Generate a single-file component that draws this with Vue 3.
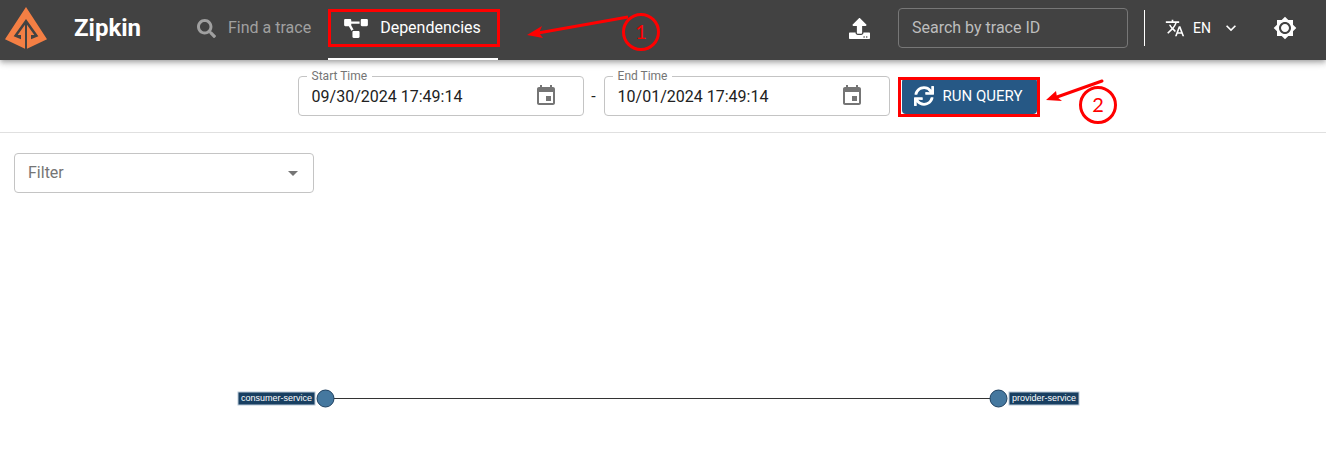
<script setup>
import { ref } from 'vue'

const icons = {
  search: 'M505 442.7L405.3 343c-4.5-4.5-10.6-7-17-7H372c27.6-35.3 44-79.7 44-128C416 93.1 322.9 0 208 0S0 93.1 0 208s93.1 208 208 208c48.3 0 92.7-16.4 128-44v16.3c0 6.4 2.5 12.5 7 17l99.7 99.7c9.4 9.4 24.6 9.4 33.9 0l28.3-28.3c9.4-9.4 9.4-24.6.1-34zM208 336c-70.7 0-128-57.2-128-128 0-70.7 57.2-128 128-128 70.7 0 128 57.2 128 128 0 70.7-57.2 128-128 128z',
  diagram: 'M384 320H256c-17.67 0-32 14.33-32 32v128c0 17.67 14.33 32 32 32h128c17.67 0 32-14.33 32-32V352c0-17.67-14.33-32-32-32zM192 32c0-17.67-14.33-32-32-32H32C14.33 0 0 14.33 0 32v128c0 17.67 14.33 32 32 32h95.72l73.16 128.04C211.98 300.98 232.4 288 256 288h.28L192 175.51V128h224V64H192V32zM608 0H480c-17.67 0-32 14.33-32 32v128c0 17.67 14.33 32 32 32h128c17.67 0 32-14.33 32-32V32c0-17.67-14.33-32-32-32z',
  upload: 'M296 384h-80c-13.3 0-24-10.7-24-24V192h-87.7c-17.8 0-26.7-21.5-14.1-34.1L242.3 5.7c7.5-7.5 19.8-7.5 27.3 0l152.2 152.2c12.6 12.6 3.7 34.1-14.1 34.1H320v168c0 13.3-10.7 24-24 24zm216-8v112c0 13.3-10.7 24-24 24H24c-13.3 0-24-10.7-24-24V376c0-13.3 10.7-24 24-24h136v8c0 30.9 25.1 56 56 56h80c30.9 0 56-25.1 56-56v-8h136c13.3 0 24 10.7 24 24zm-124 88c0-11-9-20-20-20s-20 9-20 20 9 20 20 20 20-9 20-20zm64 0c0-11-9-20-20-20s-20 9-20 20 9 20 20 20 20-9 20-20z',
  sync: 'M440.65 12.57l4 82.77A247.16 247.16 0 0 0 255.83 8C134.73 8 33.91 94.92 12.29 209.82A12 12 0 0 0 24.09 224h49.05a12 12 0 0 0 11.67-9.26 175.91 175.91 0 0 1 317-56.94l-101.46-4.86a12 12 0 0 0-12.57 12v47.41a12 12 0 0 0 12 12H500a12 12 0 0 0 12-12V12a12 12 0 0 0-12-12h-47.37a12 12 0 0 0-11.98 12.57zM255.83 432a175.61 175.61 0 0 1-146-77.8l101.8 4.87a12 12 0 0 0 12.57-12v-47.4a12 12 0 0 0-12-12H12a12 12 0 0 0-12 12V500a12 12 0 0 0 12 12h47.35a12 12 0 0 0 12-12.6l-4.15-82.57A247.17 247.17 0 0 0 255.83 504c121.11 0 221.93-86.92 243.55-201.82a12 12 0 0 0-11.8-14.18h-49.05a12 12 0 0 0-11.67 9.26A175.86 175.86 0 0 1 255.83 432z',
  translate: 'M12.87 15.07l-2.54-2.51.03-.03c1.74-1.94 2.98-4.17 3.71-6.53H17V4h-7V2H8v2H1v1.99h11.17C11.5 7.92 10.44 9.75 9 11.35 8.07 10.32 7.3 9.19 6.69 8h-2c.73 1.63 1.73 3.17 2.98 4.56l-5.09 5.02L4 19l5-5 3.11 3.11.76-2.04zM18.5 10h-2L12 22h2l1.12-3h4.75L21 22h2l-4.5-12zm-2.62 7l1.62-4.33L19.12 17h-3.24z',
  chevron: 'M16.59 8.59L12 13.17 7.41 8.59 6 10l6 6 6-6z',
  sun: 'M20 8.69V4h-4.69L12 .69 8.69 4H4v4.69L.69 12 4 15.31V20h4.69L12 23.31 15.31 20H20v-4.69L23.31 12 20 8.69zM12 18c-3.31 0-6-2.69-6-6s2.69-6 6-6 6 2.69 6 6-2.69 6-6 6zm0-10c-2.21 0-4 1.79-4 4s1.79 4 4 4 4-1.79 4-4-1.79-4-4-4z',
  calendar: 'M17 12h-5v5h5v-5zM16 1v2H8V1H6v2H5c-1.11 0-1.99.9-1.99 2L3 19c0 1.1.89 2 2 2h14c1.1 0 2-.9 2-2V5c0-1.1-.9-2-2-2h-1V1h-2zm3 18H5V8h14v11z'
}

const traceId = ref('')
const language = ref('EN')
const filter = ref('')
const startTime = ref('09/30/2024 17:49:14')
const endTime = ref('10/01/2024 17:49:14')
</script>

<template>
  <header class="bar">
    <svg class="logo" viewBox="0 0 126 126" aria-hidden="true">
      <path fill="#f47f44" d="M63 0 126 97 66 125V53l22 31-10 0v13l22-9L63 36 26 88l22 9V84H38l22-31v72L0 97z" fill-rule="evenodd" />
    </svg>
    <h1 class="brand">Zipkin</h1>
    <nav class="tabs">
      <a class="tab" href="#traces">
        <svg class="i-search" viewBox="0 0 512 512" aria-hidden="true"><path :d="icons.search" /></svg>
        Find a trace
      </a>
      <a class="tab active" href="#dependencies" aria-current="page">
        <svg class="i-diagram" viewBox="0 0 640 512" aria-hidden="true"><path :d="icons.diagram" /></svg>
        Dependencies
        <span class="mark mark-tab"></span>
        <svg class="note note-tab" width="140" height="60" viewBox="520 0 140 60" aria-hidden="true">
          <path d="M628 17 538 33" stroke="#f00" stroke-width="3" />
          <path d="M527 35 542 26 539 33 543 38z" fill="#f00" />
          <circle cx="641" cy="32" r="17.5" fill="none" stroke="#f00" stroke-width="3" />
          <text x="641" y="39" text-anchor="middle">1</text>
        </svg>
      </a>
    </nav>
    <div class="tools">
      <button class="icon-btn upload" type="button" aria-label="Upload JSON">
        <svg class="i-upload" viewBox="0 0 512 512" aria-hidden="true"><path :d="icons.upload" /></svg>
      </button>
      <input v-model="traceId" class="trace" type="text" placeholder="Search by trace ID" aria-label="Search by trace ID">
      <span class="divider"></span>
      <label class="lang">
        <svg class="i-20" viewBox="0 0 24 24" aria-hidden="true"><path :d="icons.translate" /></svg>
        <select v-model="language" aria-label="Language"><option>EN</option></select>
        <svg class="i-20" viewBox="0 0 24 24" aria-hidden="true"><path :d="icons.chevron" /></svg>
      </label>
      <button class="icon-btn" type="button" aria-label="Toggle theme">
        <svg class="i-24" viewBox="0 0 24 24" aria-hidden="true"><path :d="icons.sun" /></svg>
      </button>
    </div>
  </header>

  <form class="query" @submit.prevent>
    <div class="field">
      <label for="start">Start Time</label>
      <input id="start" v-model="startTime" type="text">
      <button class="icon-btn" type="button" aria-label="Choose start time">
        <svg class="i-24" viewBox="0 0 24 24" aria-hidden="true"><path :d="icons.calendar" /></svg>
      </button>
    </div>
    <span class="dash">-</span>
    <div class="field">
      <label for="end">End Time</label>
      <input id="end" v-model="endTime" type="text">
      <button class="icon-btn" type="button" aria-label="Choose end time">
        <svg class="i-24" viewBox="0 0 24 24" aria-hidden="true"><path :d="icons.calendar" /></svg>
      </button>
    </div>
    <div class="run-wrap">
      <button class="run" type="submit">
        <svg class="i-20" viewBox="0 0 512 512" aria-hidden="true"><path :d="icons.sync" /></svg>
        RUN QUERY
      </button>
      <span class="mark mark-run"></span>
      <svg class="note note-run" width="80" height="50" viewBox="1040 77 80 50" aria-hidden="true">
        <path d="M1101 81 1056 97" stroke="#f00" stroke-width="3" stroke-linecap="round" />
        <path d="M1045 100 1055 91 1056 97 1061 101z" fill="#f00" />
        <circle cx="1097" cy="105" r="17.5" fill="none" stroke="#f00" stroke-width="3" />
        <text x="1097" y="112" text-anchor="middle">2</text>
      </svg>
    </div>
  </form>

  <main class="content">
    <div class="filter">
      <select v-model="filter" aria-label="Filter"><option value="">Filter</option></select>
      <svg class="i-24" viewBox="0 0 24 24" aria-hidden="true"><path d="M7 10l5 5 5-5z" /></svg>
    </div>
    <svg class="graph" viewBox="0 0 1326 240" role="img" aria-label="Service dependency graph">
      <path d="M326 178.500H998" stroke="#333" />
      <g fill="#45789f" stroke="#1d4060">
        <circle cx="325.500" cy="178.500" r="8.500" />
        <circle cx="998.500" cy="178.500" r="8.500" />
      </g>
      <g fill="#183f61" stroke="#b9c9d8">
        <rect x="238" y="172" width="77" height="13" />
        <rect x="1009" y="172" width="70" height="13" />
      </g>
      <g class="node-label" text-anchor="middle">
        <text x="276.500" y="181">consumer-service</text>
        <text x="1044" y="181">provider-service</text>
      </g>
    </svg>
  </main>
</template>

<style>
body {
  margin: 0;
  background: #fff;
}
</style>

<style scoped>
.bar,
.query,
.content {
  font-family: Roboto, "Liberation Sans", sans-serif;
  font-size: 16px;
  box-sizing: border-box;
}

svg {
  display: block;
  flex: none;
  fill: currentColor;
}

input,
select,
button {
  font: inherit;
  color: inherit;
  background: none;
  border: 0;
  margin: 0;
  padding: 0;
  min-width: 0;
  box-sizing: border-box;
}

select {
  appearance: none;
}

.i-search { width: 19px; height: 19px; }
.i-diagram { width: 24px; height: 19px; }
.i-upload { width: 21px; height: 21px; }
.i-20 { width: 20px; height: 20px; }
.i-24 { width: 24px; height: 24px; }

.bar {
  position: relative;
  z-index: 1;
  display: flex;
  align-items: center;
  height: 60px;
  padding: 0 29px 4px 5px;
  color: #fff;
  background: #424242;
  box-shadow: 0 2px 4px -1px rgba(0, 0, 0, 0.2), 0 4px 5px rgba(0, 0, 0, 0.14), 0 1px 10px rgba(0, 0, 0, 0.12);
}

.logo {
  width: 42px;
  height: 42px;
}

.brand {
  width: 107px;
  margin: 0 0 0 27px;
  font-size: 24px;
  font-weight: 700;
  line-height: 28px;
}

.tabs {
  display: flex;
  align-self: flex-start;
}

.tab {
  position: relative;
  display: flex;
  align-items: center;
  gap: 12px;
  height: 60px;
  padding: 0 17px 4px 16px;
  box-sizing: border-box;
  line-height: 20px;
  color: #a0a0a0;
  text-decoration: none;
  white-space: nowrap;
}

.tab.active {
  color: #fff;
  box-shadow: inset 0 -2px #fff;
}

.mark {
  position: absolute;
  border: 3px solid #f00;
  pointer-events: none;
}

.mark-tab {
  inset: 9px -2px 13px 0;
}

.note {
  position: absolute;
  overflow: visible;
  pointer-events: none;
}

.note text {
  font-family: Lato, sans-serif;
  font-size: 20px;
  fill: #f00;
}

.note-tab {
  top: 0;
  left: calc(100% + 22px);
}

.tools {
  display: flex;
  align-items: center;
  margin-left: auto;
}

.icon-btn {
  display: flex;
}

.upload {
  margin-right: 28px;
}

.trace {
  width: 230px;
  height: 40px;
  padding: 0 13px 2px;
  border: 1px solid #777;
  border-radius: 4px;
}

.trace::placeholder {
  color: #bdbdbd;
  opacity: 1;
}

.divider {
  width: 1px;
  height: 36px;
  margin: 0 20px 0 16px;
  background: #fff;
}

.lang {
  display: flex;
  align-items: center;
  gap: 8px;
  margin-right: 32px;
  font-size: 14px;
}

.lang select {
  width: 20px;
}

.query {
  display: flex;
  align-items: center;
  justify-content: center;
  padding: 16px 0 16px 9px;
  color: #212121;
  border-bottom: 1px solid #e0e0e0;
}

.field {
  position: relative;
  display: flex;
  align-items: center;
  width: 286px;
  height: 40px;
  padding: 0 25px 0 13px;
  border: 1px solid #c4c4c4;
  border-radius: 4px;
  box-sizing: border-box;
}

.field label {
  position: absolute;
  top: -8px;
  left: 8px;
  padding: 0 5px;
  font-size: 12px;
  line-height: 14px;
  color: #757575;
  background: #fff;
}

.field input {
  flex: 1;
}

.field .icon-btn {
  color: #757575;
}

.dash {
  width: 20px;
  text-align: center;
}

.run-wrap {
  position: relative;
  margin-left: 12px;
}

.run {
  display: flex;
  align-items: center;
  gap: 9px;
  height: 36px;
  padding: 0 15px 0 12px;
  font-size: 15px;
  color: #fff;
  background: #265885;
  border-radius: 4px;
}

.mark-run {
  inset: -1px -3px -3px -4px;
}

.note-run {
  top: -1px;
  left: calc(100% + 4px);
}

.content {
  padding-top: 20px;
}

.filter {
  position: relative;
  display: flex;
  align-items: center;
  width: 300px;
  height: 40px;
  margin: 0 14px 27px;
  color: #757575;
}

.filter select {
  width: 100%;
  height: 100%;
  padding: 0 40px 2px 13px;
  border: 1px solid #c4c4c4;
  border-radius: 4px;
}

.filter svg {
  position: absolute;
  right: 9px;
  pointer-events: none;
}

.graph {
  width: 100%;
  height: auto;
}

.node-label {
  font-family: "Liberation Sans", sans-serif;
  font-size: 9px;
  fill: #fff;
}
</style>
